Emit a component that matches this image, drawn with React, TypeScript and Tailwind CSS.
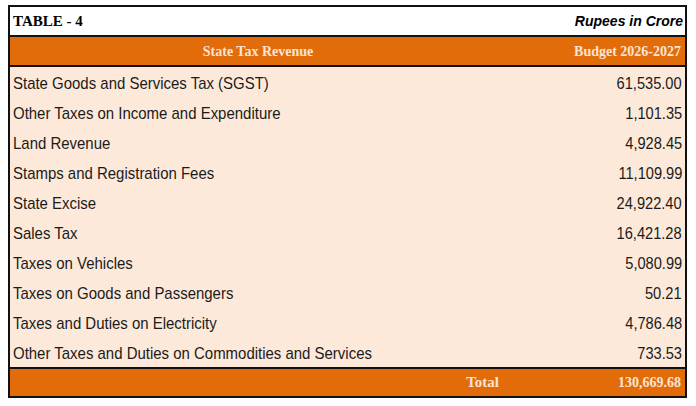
const rows: [string, string][] = [
  ["State Goods and Services Tax (SGST)", "61,535.00"],
  ["Other Taxes on Income and Expenditure", "1,101.35"],
  ["Land Revenue", "4,928.45"],
  ["Stamps and Registration Fees", "11,109.99"],
  ["State Excise", "24,922.40"],
  ["Sales Tax", "16,421.28"],
  ["Taxes on Vehicles", "5,080.99"],
  ["Taxes on Goods and Passengers", "50.21"],
  ["Taxes and Duties on Electricity", "4,786.48"],
  ["Other Taxes and Duties on Commodities and Services", "733.53"],
];

const serif = "font-['Liberation_Serif',serif]";
const sans = "font-['Liberation_Sans',Arial,sans-serif]";

export default function App() {
  return (
    <div className="w-[696px] h-[406px] bg-white pt-[5px] pl-[8px]">
      <div className="w-[679px] border-2 border-[#111]">
        {/* title row */}
        <div className="h-[28px] flex items-center justify-between pl-[3px] pr-[2px] pt-[1px] bg-white">
          <span className={`${serif} text-[15px] font-bold text-black`}>TABLE - 4</span>
          <span className={`${sans} text-[14px] font-bold italic text-black`}>Rupees in Crore</span>
        </div>

        {/* header */}
        <div className="h-[32px] border-y-2 border-[#111] bg-[#e36c0a] flex items-center">
          <div className={`w-[496px] text-center ${serif} text-[14px] font-bold text-[#fbe4d5]`}>
            State Tax Revenue
          </div>
          <div className={`flex-1 text-right pr-[4px] ${serif} text-[14px] font-bold text-[#fbe4d5]`}>
            Budget 2026-2027
          </div>
        </div>

        {/* body */}
        <div className="bg-[#fde9d9]">
          {rows.map(([label, value]) => (
            <div
              key={label}
              className={`h-[30px] flex items-center justify-between pl-[3px] pr-[3px] pt-[3px] ${sans} text-[17px] text-[#1b1b1b]`}
            >
              <span className="inline-block origin-left scale-x-[0.88]">{label}</span>
              <span className="inline-block origin-right scale-x-[0.86]">{value}</span>
            </div>
          ))}
        </div>

        {/* total */}
        <div className="h-[29px] border-t-2 border-[#111] bg-[#e36c0a] flex items-center">
          <div className={`w-[496px] text-right pr-[7px] ${serif} text-[15px] font-bold text-[#fbe4d5]`}>
            Total
          </div>
          <div className={`flex-1 text-right pr-[4px] ${serif} text-[14px] font-bold text-[#fbe4d5]`}>
            130,669.68
          </div>
        </div>
      </div>
    </div>
  );
}
